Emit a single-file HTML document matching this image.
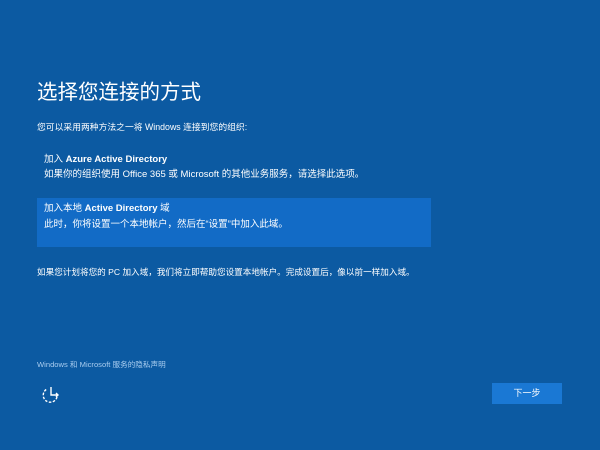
<!DOCTYPE html>
<html><head><meta charset="utf-8"><style>
*{margin:0;padding:0}
body{width:600px;height:450px;background:#0c5aa2;color:#fff;font-family:"Liberation Sans","Noto Sans CJK SC",sans-serif;position:relative;overflow:hidden}
.a{position:absolute;white-space:nowrap;font-size:9.5px;line-height:12px}
</style></head><body>
<div class="a" style="left:37px;top:80px;font-size:20.5px;line-height:26px">选择您连接的方式</div>
<div class="a" style="left:37px;top:121px;font-size:8.8px">您可以采用两种方法之一将 Windows 连接到您的组织:</div>
<div class="a" style="left:44px;top:154px">加入 <b>Azure Active Directory</b></div>
<div class="a" style="left:44px;top:169px">如果你的组织使用 Office 365 或 Microsoft 的其他业务服务，请选择此选项。</div>
<div style="position:absolute;left:37px;top:198px;width:394px;height:49px;background:#126bc6"></div>
<div class="a" style="left:44px;top:203px">加入本地 <b>Active Directory</b> 域</div>
<div class="a" style="left:44px;top:219px">此时，你将设置一个本地帐户，然后在“设置”中加入此域。</div>
<div class="a" style="left:37px;top:266px;font-size:8.6px">如果您计划将您的 PC 加入域，我们将立即帮助您设置本地帐户。完成设置后，像以前一样加入域。</div>
<div class="a" style="left:37px;top:359px;font-size:7.6px;color:#a9cdf0">Windows 和 Microsoft 服务的隐私声明</div>
<svg style="position:absolute;left:40px;top:384px" width="22" height="22" viewBox="0 0 22 22" fill="none" stroke="#fff" stroke-width="1.4">
<path d="M17 13 A7 7 0 1 1 7 5" stroke-dasharray="2.5 1.5"/><path d="M11 3 V11 H18 M16 9 L18 11 L16 13"/></svg>
<div style="position:absolute;left:492px;top:383px;width:70px;height:21px;background:#1a78d4;font-size:9px;line-height:21px;text-align:center">下一步</div>
</body></html>
